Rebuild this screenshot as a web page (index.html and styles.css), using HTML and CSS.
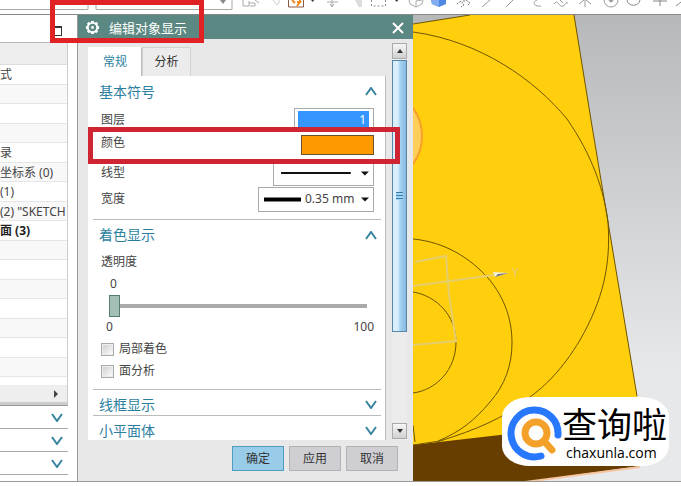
FILE: index.html
```html
<!DOCTYPE html>
<html lang="zh-CN">
<head>
<meta charset="utf-8">
<title>编辑对象显示</title>
<link rel="stylesheet" href="styles.css">
</head>
<body>
<header class="toolbar">
  <svg class="tools" viewBox="0 0 681 14" width="681" height="14" fill="none" stroke="#aaa" aria-hidden="true">
    <path d="M0 9.500H88V0M96 0V9.500H232V0"/>
    <path d="M220 0h6l-3 4z" fill="#888" stroke="none"/>
    <path d="M243 0v6h6V1M249 3h6v3h-5M255 0l4 3"/>
    <path d="M273 0l4 5 2-2V0" stroke="#ccc"/>
    <path d="M288.500 0v7h15V0" stroke="#8a5a48"/><path d="M292 0l3 3M297 2h3l-3 4M300 0v3" stroke="#ef8a22" stroke-width="2"/>
    <path d="M311 0h3l-1 2z" fill="#333" stroke="none"/>
    <path d="M327 2h11M332 0v7M330 4l2 3 2-3"/>
    <path d="M355 0h7M356 2h6M357 4h5M358 6h4" stroke="#bbb"/>
    <path d="M371.500 0v6h14V0" stroke="#888" stroke-dasharray="2 2"/>
    <path d="M395 0h3l-1 2z" fill="#333" stroke="none"/>
    <path d="M409 0l1 4 6 3 6-3 1-4M416 7V1l6-1"/>
    <path d="M431 0l1 4 7 3 7-3V0z" fill="#4f88e3" stroke="none"/><path d="M431 0l1 4 7 3V0z" fill="#83adf0" stroke="none"/>
    <path d="M457 4l4-3 3 4-3 2M466 0l4 3-3 3M464 0v3" stroke="#777" stroke-dasharray="2 1"/>
    <path d="M482 7l8-7M506 7l7-7M537 0c-5 2-3 7 4 6M554 4c4-6 5 4 9 2 3-1 2-4 5-3M560 0l3 3M585 0v7M579 4l5-4M591 4l-5-4" stroke="#999"/>
    <circle cx="611" cy="0" r="7" stroke="#999"/><circle cx="611" cy="0" r="2" fill="#999"/>
    <path d="M627 0c1 7 12 7 13 0M653 1h14M660 0v6M676 6l5-4" stroke="#888"/>
  </svg>
</header>
<main class="workspace">
  <aside class="navigator">
    <div class="nav-top"><span class="pin"></span></div>
    <div class="nav-head"></div>
    <ul class="tree">
      <li>式</li><li></li><li></li><li></li><li>录</li><li>坐标系 (0)</li><li>(1)</li><li>(2) "SKETCH</li>
      <li class="bold">面 (3)</li><li></li><li></li><li></li><li></li><li></li><li></li><li></li>
    </ul>
    <div class="hscroll"><svg width="5" height="8" viewBox="0 0 5 8" aria-hidden="true"><path d="M0 0l4 4-4 4z" fill="#444"/></svg></div>
    <div class="nav-gap"></div>
    <button class="fold" type="button" aria-label="展开"><svg class="chev" viewBox="0 0 12 9"><path d="M1 1l5 7 5-7"/></svg></button>
    <button class="fold" type="button" aria-label="展开"><svg class="chev" viewBox="0 0 12 9"><path d="M1 1l5 7 5-7"/></svg></button>
    <button class="fold" type="button" aria-label="展开"><svg class="chev" viewBox="0 0 12 9"><path d="M1 1l5 7 5-7"/></svg></button>
  </aside>

  <form class="dialog">
    <div class="titlebar">
      <svg class="gear" viewBox="0 0 16 16" aria-hidden="true"><circle cx="8" cy="8" r="5" fill="none" stroke="#fff" stroke-width="2"/><circle cx="8" cy="8" r="1.500" fill="#fff"/><path d="M8 1v2M8 13v2M1 8h2M13 8h2M3 3l2 2M11 11l2 2M3 13l2-2M11 5l2-2" stroke="#fff" stroke-width="3"/></svg>
      <h1>编辑对象显示</h1>
      <button class="close" type="button" aria-label="关闭"><svg viewBox="0 0 12 12"><path d="M1 1l10 10M11 1L1 11" stroke="#fff" stroke-width="2"/></svg></button>
    </div>
    <div class="body">
      <div class="pages">
        <div class="tabs"><button class="tab active" type="button">常规</button><button class="tab" type="button">分析</button></div>
        <div class="panel">
          <section class="basic">
            <h2>基本符号 <svg class="chev" viewBox="0 0 12 9"><path d="M1 8l5-7 5 7"/></svg></h2>
            <div class="field layer"><label for="layer">图层</label><span class="box"><input id="layer" value="1"></span></div>
            <div class="field color"><label for="color">颜色</label><button id="color" class="swatch" type="button" aria-label="颜色"></button></div>
            <div class="field"><label for="line">线型</label>
              <span class="pick type"><select id="line" aria-label="线型"><option></option></select><svg viewBox="0 0 100 24" aria-hidden="true"><path d="M8 11.500h69" stroke="#111" stroke-width="2"/><path d="M87 10h8l-4 4z" fill="#111"/></svg></span></div>
            <div class="field"><label for="width">宽度</label>
              <span class="pick width"><select id="width"><option>0.35 mm</option></select><svg viewBox="0 0 116 24" aria-hidden="true"><path d="M6 12h37" stroke="#000" stroke-width="4"/><path d="M103 10h8l-4 4z" fill="#111"/></svg></span></div>
          </section>
          <section class="shade">
            <h2>着色显示 <svg class="chev" viewBox="0 0 12 9"><path d="M1 8l5-7 5 7"/></svg></h2>
            <label class="opacity-label" for="opacity">透明度</label>
            <output class="value" for="opacity">0</output>
            <input id="opacity" type="range" min="0" max="100" value="0">
            <div class="limits"><span>0</span><span>100</span></div>
            <label class="check"><input type="checkbox">局部着色</label>
            <label class="check"><input type="checkbox">面分析</label>
          </section>
          <section class="closed"><h2>线框显示 <svg class="chev" viewBox="0 0 12 9"><path d="M1 1l5 7 5-7"/></svg></h2></section>
          <section class="closed"><h2>小平面体 <svg class="chev" viewBox="0 0 12 9"><path d="M1 1l5 7 5-7"/></svg></h2></section>
        </div>
      </div>
      <div class="vscroll">
        <button class="step" type="button" aria-label="向上"><svg viewBox="0 0 6 4"><path d="M0 4l3-4 3 4z"/></svg></button>
        <div class="thumb"><span></span></div>
        <button class="step" type="button" aria-label="向下"><svg viewBox="0 0 6 4"><path d="M0 0l3 4 3-4z"/></svg></button>
      </div>
    </div>
    <div class="actions"><button class="primary" type="button">确定</button><button type="button">应用</button><button type="button">取消</button></div>
    <div class="mark mark-title"></div>
    <div class="mark mark-color"></div>
  </form>

  <div class="viewport">
    <svg class="scene" viewBox="413 15 268 467" preserveAspectRatio="xMinYMin slice" aria-hidden="true">
      <path d="M413 24L470 15H574L591 120 621 300 637 396 642 430 640 466H413z" fill="#ffce0c"/>
      <path d="M413 445L500 435 600 424H640V466L525 482H413z" fill="#683d00"/>
      <path d="M525 482L640 467" stroke="#f5c4a0" stroke-width="2"/>
      <circle cx="374" cy="136" r="48" fill="#ffce58" stroke="#f7a02c" stroke-width="2"/>
      <g fill="none" stroke="#6e5500">
        <path d="M413 24L470 15M574 15L591 120 621 300 637 396"/>
        <path d="M413 32C480 41 535 80 567 119C592 155 604 190 608 222C611 265 603 300 580 340C562 370 545 386 530 397C505 418 475 430 440 441"/>
        <path d="M413 239C445 242 470 258 488 278C505 298 512 320 512 343C512 365 505 385 490 402C475 420 460 432 438 441"/>
        <path d="M413 292C437 296 456 316 456 342C456 370 436 390 413 393"/>
        <path d="M413 445L440 441M413 425l2 17"/>
      </g>
      <g fill="none" stroke="#e6ce6e" stroke-width="2">
        <path d="M413 286L494 275M415 262L446 256L449 295L456 341L413 345"/>
      </g>
      <path d="M493 272L509 273 495 277z" fill="#f4f0d8"/><path d="M495 277l14-4-11 1z" fill="#777"/>
      <text x="512" y="277" class="axis">Y</text>
    </svg>
    <div class="brand">
      <svg viewBox="0 0 56 60" aria-hidden="true" fill="none" stroke-linecap="round">
        <path d="M52 33A23.500 23.500 0 1 0 35 54" stroke="#2878ff" stroke-width="7"/>
        <circle cx="30" cy="31" r="11" stroke="#f4a12c" stroke-width="7"/><path d="M38 39l8 9" stroke="#f4a12c" stroke-width="7"/>
      </svg>
      <div class="brand-text"><strong>查询啦</strong><span>chaxunla.com</span></div>
    </div>
  </div>
</main>
</body>
</html>
```
FILE: styles.css
```css
* { box-sizing: border-box; }
body {
  margin: 0;
  height: 100vh;
  display: flex;
  flex-direction: column;
  overflow: hidden;
  padding-bottom: 4px;
  background: #fff;
  color: #444;
  font: 12px/16px "Noto Sans", "Noto Sans CJK SC", sans-serif;
}
button { padding: 0; border: 0; background: none; font: inherit; color: inherit; }
h1, h2 { margin: 0; font-weight: 400; }
.toolbar { height: 15px; border-bottom: 1px solid #888; overflow: hidden; }
.tools { display: block; }
.workspace {
  flex: 1;
  min-height: 0;
  display: grid;
  grid-template-columns: 77px 336px 1fr;
  border-bottom: 1px solid #999;
}
.chev { width: 12px; height: 9px; fill: none; stroke: #37859f; stroke-width: 2; }

.navigator { display: flex; flex-direction: column; min-height: 0; padding-right: 9px; }
.nav-top { height: 28px; flex: none; border-bottom: 1px solid #bbb; display: flex; justify-content: flex-end; align-items: center; padding: 4px 6px 0 0; }
.pin { width: 9px; height: 10px; border: 1px solid #333; border-top-width: 2px; }
.nav-head { height: 22px; flex: none; background: #eee; border-right: 1px solid #ccc; border-bottom: 1px solid #ddd; }
.tree { list-style: none; margin: 0; padding: 0 0 8px; flex: 1; display: flex; flex-direction: column; border-right: 1px solid #ccc; }
.tree li { flex: 1; min-height: 0; display: flex; align-items: center; padding-top: 2px; border-bottom: 1px solid #e6e6e6; white-space: nowrap; overflow: hidden; color: #444; }
.tree li:nth-child(even) { background: #f8f8f8; }
.tree .bold { font-weight: 700; color: #222; }
.hscroll { height: 17px; flex: none; display: flex; align-items: center; justify-content: flex-end; padding-right: 8px; background: #eee; border-right: 1px solid #ccc; }
.nav-gap { height: 4px; flex: none; background: #ccc; border-bottom: 1px solid #999; }
.fold { height: 23px; flex: none; display: flex; align-items: center; justify-content: flex-end; padding-right: 5px; border-bottom: 1px solid #aaa; }
.fold:last-child { margin-bottom: 6px; }

.dialog { position: relative; min-height: 0; display: flex; flex-direction: column; background: #e8e8e8; border-left: 1px solid #999; }
.titlebar { height: 24px; flex: none; display: flex; align-items: center; gap: 9px; padding: 1px 9px 0 7px; background: #5b8882; color: #fff; }
.gear { width: 15px; height: 15px; }
.titlebar h1 { font-size: 13px; line-height: 20px; flex: 1; }
.close { width: 12px; height: 20px; display: flex; align-items: center; }
.body { flex: 1; min-height: 0; display: flex; gap: 6px; padding: 4px 6px 0 10px; }
.pages { flex: 1; min-width: 0; display: flex; flex-direction: column; padding-top: 4px; }
.tabs { display: flex; flex: none; height: 29px; }
.tab { width: 49px; border: 1px solid #d2d2d2; border-bottom: 0; background: #ececec; color: #333; }
.tab.active { width: 54px; background: #fff; color: #2d7f9f; border-color: #fff; border-right-color: #bbb; }
.panel { flex: 1; min-height: 0; overflow: hidden; background: #fff; border-right: 1px solid #bbb; padding: 4px 0 0 5px; }
.panel section { margin-right: 4px; padding: 0 7px 0 8px; border-bottom: 1px solid #bbb; }
.panel h2 { display: flex; justify-content: space-between; align-items: center; margin-left: -2px; height: 23px; color: #2d7f9f; font-size: 14px; line-height: 20px; }
.panel h2 .chev { margin-right: -3px; }
.basic { height: 140px; }
.field { display: flex; justify-content: space-between; align-items: center; height: 26px; }
.field.layer { margin-top: 4px; }
.field.color { height: 24px; padding-bottom: 2px; margin-bottom: 3px; align-items: flex-start; line-height: 20px; }
.box { width: 80px; height: 24px; border: 1px solid #aaa; padding: 2px 4px 2px 3px; display: flex; }
.box input { width: 100%; border: 0; padding: 0 3px; background: #3596ff; color: #fff; font: inherit; text-align: right; }
.swatch { width: 73px; height: 20px; margin-top: 2px; background: #ff9900; border: 1px solid #685030; }
.pick { display: grid; height: 25px; }
.pick.type { width: 101px; }
.pick.width { width: 116px; }
.pick > * { grid-area: 1 / 1; width: 100%; height: 100%; }
.pick select { appearance: none; border: 1px solid #aaa; border-radius: 0; background: #fff; padding: 0 0 0 46px; font: inherit; color: #444; }
.pick svg { pointer-events: none; }
.shade { height: 170px; }
.shade h2 { height: 30px; }
.opacity-label, .value { display: block; height: 22px; line-height: 24px; }
.value { padding-left: 9px; }
input[type="range"] { appearance: none; display: block; width: 258px; height: 22px; margin: 1px 0 0 8px; background: linear-gradient(#aaa, #aaa) center / 100% 4px no-repeat; }
input[type="range"]::-webkit-slider-thumb { appearance: none; width: 11px; height: 22px; background: #a3bfb6; border: 1px solid #587d75; }
.limits { display: flex; justify-content: space-between; height: 21px; line-height: 20px; padding: 0 0 0 5px; }
.check { display: flex; align-items: center; gap: 5px; height: 22px; }
.check input { appearance: none; width: 13px; height: 13px; margin: 0; border: 1px solid #aaa; background: linear-gradient(135deg, #ccc, #fff); box-shadow: inset 0 0 0 1px #eee; }
.closed h2 { height: 25px; padding-top: 4px; }

.vscroll { width: 15px; display: flex; flex-direction: column; background: #ececec; padding-bottom: 1px; }
.step { height: 16px; flex: none; border: 1px solid #aaa; background: linear-gradient(#f6f6f6, #d0d0d0); display: flex; justify-content: center; align-items: center; }
.step svg { width: 6px; height: 4px; fill: #333; }
.thumb { flex: 0 0 75%; margin: 1px 0 auto; max-height: 272px; border: 1px solid #5886a3; background: linear-gradient(90deg, #d9f0fc 0 35%, #a5d4f1 55%, #88b8df); display: flex; align-items: center; justify-content: center; }
.thumb span { width: 7px; height: 8px; background: repeating-linear-gradient(#347aaa 0 1px, #a5d4f1 1px 3px); }
.actions { height: 41px; flex: none; display: flex; justify-content: flex-end; gap: 5px; padding: 6px 15px 10px; }
.actions button { width: 52px; background: #cfcfd3; border: 1px solid #b2b2b7; color: #333; }
.actions .primary { background: #98cce9; border-color: #4f9cc1; }
.mark { position: absolute; border: 5px solid #cf2432; pointer-events: none; }
.mark-title { left: -28px; top: -15px; width: 154px; height: 43px; border-color: #e02225; }
.mark-color { left: 10px; top: 112px; width: 312px; height: 37px; }

.viewport { position: relative; min-width: 0; min-height: 0; overflow: hidden; background: linear-gradient(#b7b8ba, #e6e7e9 75%, #e8e9eb); }
.scene { display: block; width: 100%; height: 100%; }
.axis { font: 12px "Noto Sans", sans-serif; fill: #e5cf79; }
.brand { position: absolute; right: 12px; bottom: 15px; width: 167px; height: 69px; display: flex; align-items: center; padding-left: 4px; background: #fff; border-radius: 28px / 20px; color: #000; }
.brand svg { width: 56px; height: 60px; flex: none; }
.brand-text { display: flex; flex-direction: column; align-items: flex-start; padding-top: 3px; }
.brand strong { font: 400 35px/40px "Noto Sans CJK SC", sans-serif; white-space: nowrap; }
.brand span { font: 500 14px/20px "Open Sans", sans-serif; padding-left: 4px; }
```
